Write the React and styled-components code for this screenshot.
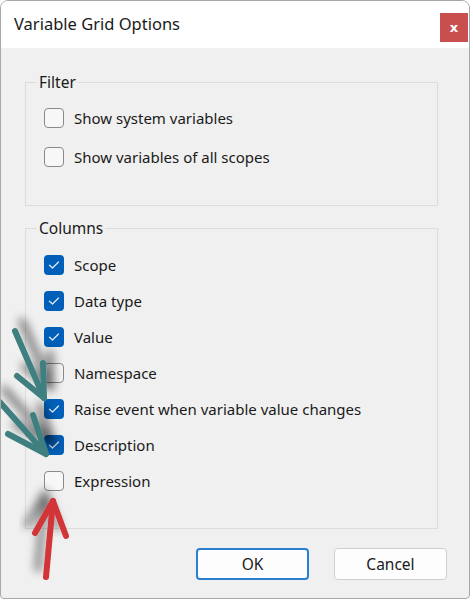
import React from "react";
import styled, { createGlobalStyle } from "styled-components";

const Global = createGlobalStyle`
  html, body { margin: 0; padding: 0; background: #ffffff; }
  body { font-family: "Noto Sans", "Open Sans", sans-serif; color: #1b1b1b; }
  * { box-sizing: border-box; }
`;

const Window = styled.div`
  position: relative;
  width: 470px;
  height: 599px;
  border: 1px solid #a8a8a8;
  border-radius: 8px 8px 4px 4px;
  overflow: hidden;
  display: flex;
  flex-direction: column;
  background: #f0f0f0;
`;

const TitleBar = styled.div`
  height: 47px;
  background: #ffffff;
  display: flex;
  align-items: center;
  justify-content: space-between;
  padding: 0 1px 0 13px;
`;

const Title = styled.div`
  font-size: 16.5px;
  color: #1a1a1a;
  margin-top: -2px;
`;

const CloseButton = styled.div`
  align-self: flex-start;
  width: 28px;
  height: 29px;
  margin-top: 12px;
  background: #c94f4f;
  display: flex;
  align-items: center;
  justify-content: center;
  color: #fff;
  font-family: "DejaVu Sans", sans-serif;
  font-weight: bold;
  font-size: 13px;
`;

const Body = styled.div`
  flex: 1;
  display: flex;
  flex-direction: column;
  padding: 24px 22px 0 24px;
`;

const Group = styled.fieldset`
  margin: ${(p) => (p.$first ? "0" : "12px")} 9px 0 0;
  padding: ${(p) => p.$pt}px 0 ${(p) => p.$pb}px 18px;
  border: 1px solid #dcdcdc;
  min-width: 0;
  display: flex;
  flex-direction: column;
  gap: ${(p) => p.$gap}px;
`;

const Legend = styled.legend`
  padding: 0 2px;
  margin-left: -7px;
  font-size: 15.5px;
  line-height: 20px;
  color: #1a1a1a;
`;

const Row = styled.label`
  display: flex;
  align-items: center;
  height: 20px;
  gap: 10px;
  font-size: 15px;
  color: #1a1a1a;
`;

const Box = styled.span`
  width: 20px;
  height: 20px;
  border-radius: 4px;
  flex: none;
  display: flex;
  align-items: center;
  justify-content: center;
  background: ${(p) => (p.$checked ? "#005fb8" : "#f7f7f7")};
  border: ${(p) => (p.$checked ? "none" : "1.5px solid #8a8a8a")};
`;

const Footer = styled.div`
  display: flex;
  justify-content: flex-end;
  gap: 25px;
  margin-top: 19px;
`;

const Button = styled.button`
  width: 113px;
  height: 32px;
  border-radius: 4px;
  font-family: "Noto Sans", sans-serif;
  font-size: 15.5px;
  color: #1a1a1a;
  background: #fdfdfd;
  border: ${(p) => (p.$primary ? "2px solid #2b7fd0" : "1px solid #cfcfcf")};
  padding: 0;
`;

const Overlay = styled.svg`
  position: absolute;
  left: 0;
  top: 0;
  pointer-events: none;
`;

function Check({ checked }) {
  return (
    <Box $checked={checked}>
      {checked && (
        <svg width="12" height="10" viewBox="0 0 12 10">
          <path d="M1.5 5.2 L4.5 8 L10.5 2" fill="none" stroke="#dfe9f5" strokeWidth="1.3" strokeLinecap="round" strokeLinejoin="round" />
        </svg>
      )}
    </Box>
  );
}

const filters = [
  { label: "Show system variables", checked: false },
  { label: "Show variables of all scopes", checked: false },
];

const columns = [
  { label: "Scope", checked: true },
  { label: "Data type", checked: true },
  { label: "Value", checked: true },
  { label: "Namespace", checked: false },
  { label: "Raise event when variable value changes", checked: true },
  { label: "Description", checked: true },
  { label: "Expression", checked: false },
];

function Arrows() {
  return (
    <Overlay width="470" height="600" viewBox="0 0 470 600">
      <defs>
        <filter id="shadow" x="-50%" y="-50%" width="200%" height="200%">
          <feGaussianBlur in="SourceAlpha" stdDeviation="5" />
          <feOffset dx="7" dy="-10" result="b" />
          <feComponentTransfer>
            <feFuncA type="linear" slope="0.6" />
          </feComponentTransfer>
          <feMerge>
            <feMergeNode />
            <feMergeNode in="SourceGraphic" />
          </feMerge>
        </filter>
        <filter id="shadow2" x="-50%" y="-50%" width="200%" height="200%">
          <feGaussianBlur in="SourceAlpha" stdDeviation="5" />
          <feOffset dx="-8" dy="-8" result="b" />
          <feComponentTransfer>
            <feFuncA type="linear" slope="0.55" />
          </feComponentTransfer>
          <feMerge>
            <feMergeNode />
            <feMergeNode in="SourceGraphic" />
          </feMerge>
        </filter>
      </defs>
      <g filter="url(#shadow)" stroke="#3f7f80" strokeWidth="6" strokeLinecap="round" strokeLinejoin="round" fill="none">
        <path d="M14 330 L43 397" />
        <path d="M16 375 L43 397 L42 362" />
        <path d="M-4 398 L45 453" />
        <path d="M7 433 L45 453 L32 414" />
      </g>
      <g filter="url(#shadow2)" stroke="#d13438" strokeWidth="6" strokeLinecap="round" strokeLinejoin="round" fill="none">
        <path d="M45 576 L52 500" />
        <path d="M34 532 L52 500 L65 535" />
      </g>
    </Overlay>
  );
}

export default function App() {
  return (
    <>
      <Global />
      <Window>
        <TitleBar>
          <Title>Variable Grid Options</Title>
          <CloseButton>x</CloseButton>
        </TitleBar>
        <Body>
          <Group $first $pt={16} $pb={38} $gap={19}>
            <Legend>Filter</Legend>
            {filters.map((f) => (
              <Row key={f.label}>
                <Check checked={f.checked} />
                {f.label}
              </Row>
            ))}
          </Group>
          <Group $pt={17} $pb={37} $gap={16}>
            <Legend>Columns</Legend>
            {columns.map((f) => (
              <Row key={f.label}>
                <Check checked={f.checked} />
                {f.label}
              </Row>
            ))}
          </Group>
          <Footer>
            <Button $primary>OK</Button>
            <Button>Cancel</Button>
          </Footer>
        </Body>
        <Arrows />
      </Window>
    </>
  );
}
